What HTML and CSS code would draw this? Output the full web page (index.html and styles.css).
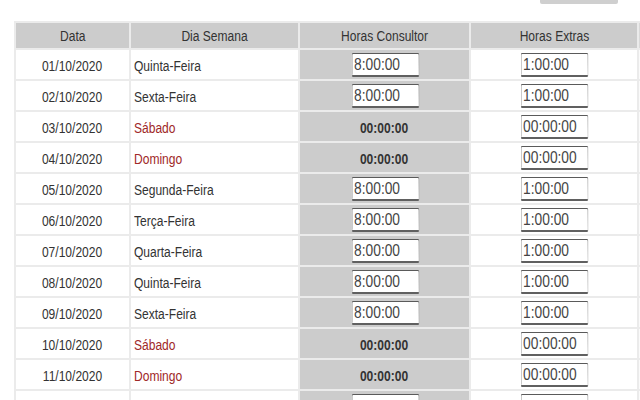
FILE: index.html
```html
<!DOCTYPE html>
<html lang="pt">
<head>
<meta charset="utf-8">
<title>Horas</title>
<link rel="stylesheet" href="styles.css">
</head>
<body>
<div class="page">
  <div class="toolbar"><span class="tool-btn"></span></div>
  <table class="grid">
    <thead>
      <tr>
        <th class="c-data"><span class="t">Data</span></th>
        <th class="c-dia"><span class="t">Dia Semana</span></th>
        <th class="c-cons"><span class="t">Horas Consultor</span></th>
        <th class="c-ext"><span class="t">Horas Extras</span></th>
        <th class="c-more"></th>
      </tr>
    </thead>
    <tbody>
      <tr><td class="date"><span class="t">01/10/2020</span></td><td class="day"><span class="t tl">Quinta-Feira</span></td><td class="cons"><input class="hr" value="8:00:00"></td><td class="ext"><input class="hr" value="1:00:00"></td><td class="more"></td></tr>
      <tr><td class="date"><span class="t">02/10/2020</span></td><td class="day"><span class="t tl">Sexta-Feira</span></td><td class="cons"><input class="hr" value="8:00:00"></td><td class="ext"><input class="hr" value="1:00:00"></td><td class="more"></td></tr>
      <tr><td class="date"><span class="t">03/10/2020</span></td><td class="day weekend"><span class="t tl">Sábado</span></td><td class="cons zero"><span class="t">00:00:00</span></td><td class="ext"><input class="hr" value="00:00:00"></td><td class="more"></td></tr>
      <tr><td class="date"><span class="t">04/10/2020</span></td><td class="day weekend"><span class="t tl">Domingo</span></td><td class="cons zero"><span class="t">00:00:00</span></td><td class="ext"><input class="hr" value="00:00:00"></td><td class="more"></td></tr>
      <tr><td class="date"><span class="t">05/10/2020</span></td><td class="day"><span class="t tl">Segunda-Feira</span></td><td class="cons"><input class="hr" value="8:00:00"></td><td class="ext"><input class="hr" value="1:00:00"></td><td class="more"></td></tr>
      <tr><td class="date"><span class="t">06/10/2020</span></td><td class="day"><span class="t tl">Terça-Feira</span></td><td class="cons"><input class="hr" value="8:00:00"></td><td class="ext"><input class="hr" value="1:00:00"></td><td class="more"></td></tr>
      <tr><td class="date"><span class="t">07/10/2020</span></td><td class="day"><span class="t tl">Quarta-Feira</span></td><td class="cons"><input class="hr" value="8:00:00"></td><td class="ext"><input class="hr" value="1:00:00"></td><td class="more"></td></tr>
      <tr><td class="date"><span class="t">08/10/2020</span></td><td class="day"><span class="t tl">Quinta-Feira</span></td><td class="cons"><input class="hr" value="8:00:00"></td><td class="ext"><input class="hr" value="1:00:00"></td><td class="more"></td></tr>
      <tr><td class="date"><span class="t">09/10/2020</span></td><td class="day"><span class="t tl">Sexta-Feira</span></td><td class="cons"><input class="hr" value="8:00:00"></td><td class="ext"><input class="hr" value="1:00:00"></td><td class="more"></td></tr>
      <tr><td class="date"><span class="t">10/10/2020</span></td><td class="day weekend"><span class="t tl">Sábado</span></td><td class="cons zero"><span class="t">00:00:00</span></td><td class="ext"><input class="hr" value="00:00:00"></td><td class="more"></td></tr>
      <tr><td class="date"><span class="t">11/10/2020</span></td><td class="day weekend"><span class="t tl">Domingo</span></td><td class="cons zero"><span class="t">00:00:00</span></td><td class="ext"><input class="hr" value="00:00:00"></td><td class="more"></td></tr>
      <tr><td class="date"></td><td class="day"></td><td class="cons"><input class="hr" value=""></td><td class="ext"><input class="hr" value=""></td><td class="more"></td></tr>
    </tbody>
  </table>
</div>
</body>
</html>
```

FILE: styles.css
```css
html, body {
  margin: 0;
  padding: 0;
  background: #ffffff;
  overflow: hidden;
}

.page {
  width: 640px;
  height: 400px;
  overflow: hidden;
  font-family: "Liberation Sans", Arial, sans-serif;
  font-size: 14px;
  color: #333333;
}

.toolbar {
  display: flex;
  justify-content: flex-end;
  height: 4px;
  padding-right: 22px;
  margin-bottom: 17px;
}

.tool-btn {
  display: block;
  width: 78px;
  height: 4px;
  background: #cfcfcf;
  border-radius: 0 0 2px 2px;
}

.grid {
  margin-left: 14px;
  border-collapse: separate;
  border-spacing: 2px;
  background: #ebebeb;
  table-layout: fixed;
  width: 720px;
}

.t {
  display: inline-block;
  transform: scaleX(0.86);
  transform-origin: center;
  white-space: nowrap;
}

.t.tl {
  transform-origin: left center;
}

.grid th {
  height: 25px;
  padding: 0;
  background: #cccccc;
  font-weight: normal;
  text-align: center;
  vertical-align: middle;
}

.c-data { width: 113px; }
.c-dia { width: 167px; }
.c-cons { width: 169px; }
.c-ext { width: 166px; }
.c-more { width: 95px; }

.grid th.c-more {
  background: #d9d9d9;
}

.grid td {
  height: 29px;
  padding: 3px 0 0 0;
  box-sizing: border-box;
  background: #ffffff;
  vertical-align: middle;
}

.date {
  text-align: center;
}

.grid td.day {
  text-align: left;
  padding-left: 3px;
}

.weekend {
  color: #a02828;
}

.grid td.cons {
  background: #cccccc;
  text-align: center;
}

.zero {
  font-weight: bold;
}

.ext {
  text-align: center;
}

.grid td.more {
  background: #fafafa;
}

.hr {
  box-sizing: border-box;
  width: 79px;
  height: 24px;
  margin: -2px -6px 0 -5px;
  padding: 0 2px;
  border: 1px solid #727272;
  border-top-color: #5a5a5a;
  border-left-color: #5a5a5a;
  border-bottom: 2px solid #606060;
  border-radius: 2px;
  background: #ffffff;
  font-family: "Liberation Sans", Arial, sans-serif;
  font-size: 16px;
  color: #444444;
  text-align: left;
  vertical-align: middle;
  transform: scaleX(0.86);
  transform-origin: center;
}
```
